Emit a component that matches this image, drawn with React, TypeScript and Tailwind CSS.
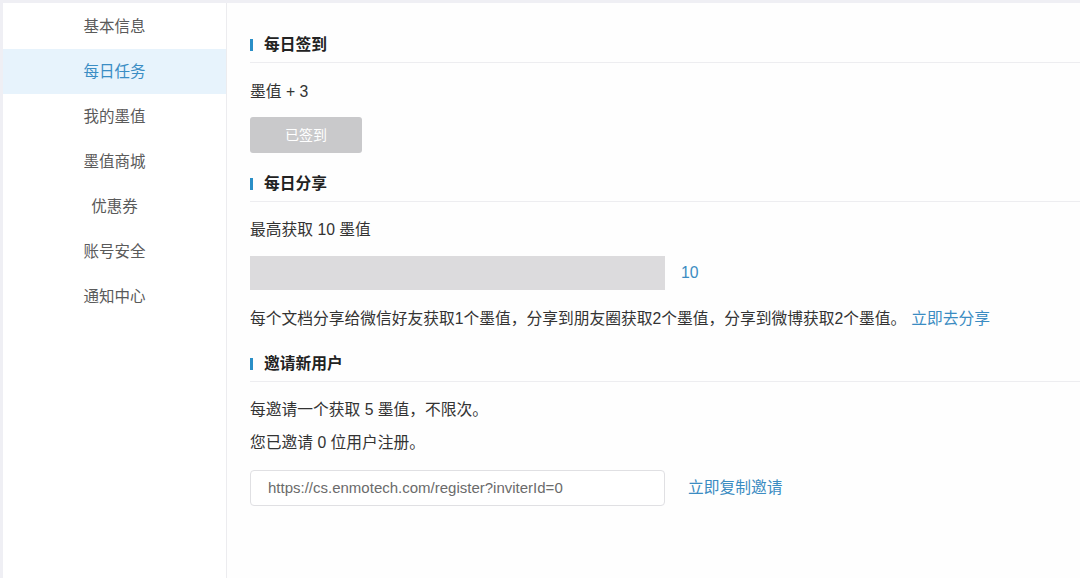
const menu = ["基本信息", "每日任务", "我的墨值", "墨值商城", "优惠券", "账号安全", "通知中心"];

const font = "font-['Liberation_Sans','Noto_Sans_CJK_SC',sans-serif]";

function SectionTitle({ title }: { title: string }) {
  return (
    <div className="flex h-[36px] items-center border-b border-[#ededf0]">
      <span className="h-[12px] w-[3px] bg-[#2a8fc7]" />
      <span className="ml-[11px] text-[15.75px] font-bold text-[#222]">{title}</span>
    </div>
  );
}

export default function App() {
  return (
    <div className={`${font} flex h-[578px] w-[1080px] bg-[#efeff4] pl-[3px] pt-[3px]`}>
      <aside className="w-[224px] shrink-0 border-r border-[#ececef] bg-white pt-[1px]">
        {menu.map((item, i) => (
          <div
            key={item}
            className={`flex h-[45px] items-center justify-center text-[15.5px] ${
              i === 1 ? "bg-[#e7f3fc] text-[#3a8dc4]" : "text-[#5a5a5a]"
            }`}
          >
            {item}
          </div>
        ))}
      </aside>

      <main className="flex-1 bg-[#fefefe] pl-[23px] pt-[24px] text-[15.75px] text-[#333]">
        <SectionTitle title="每日签到" />
        <div className="mt-[15px] flex h-[28px] items-center">墨值 + 3</div>
        <button className="mt-[11px] flex h-[36px] w-[112px] items-center justify-center rounded-[3px] bg-[#c9c9cb] text-[14px] text-white">
          已签到
        </button>

        <div className="mt-[13px]">
          <SectionTitle title="每日分享" />
        </div>
        <div className="mt-[14px] flex h-[28px] items-center">最高获取 10 墨值</div>
        <div className="mt-[12px] flex items-center">
          <div className="h-[34px] w-[415px] bg-[#dcdbdd]" />
          <span className="ml-[16px] text-[#3b8cc2]">10</span>
        </div>
        <div className="mt-[15px] flex h-[28px] items-center">
          每个文档分享给微信好友获取1个墨值，分享到朋友圈获取2个墨值，分享到微博获取2个墨值。
          <a className="ml-[5px] text-[#3b8cc2]">立即去分享</a>
        </div>

        <div className="mt-[13px]">
          <SectionTitle title="邀请新用户" />
        </div>
        <div className="mt-[14px] flex h-[28px] items-center">每邀请一个获取 5 墨值，不限次。</div>
        <div className="mt-[5px] flex h-[28px] items-center">您已邀请 0 位用户注册。</div>
        <div className="mt-[13px] flex items-center">
          <div className="flex h-[36px] w-[415px] items-center rounded-[4px] border border-[#e0e0e3] bg-white pl-[17px] text-[15px] text-[#6b6b6b]">
            https://cs.enmotech.com/register?inviterId=0
          </div>
          <a className="ml-[23px] text-[#3b8cc2]">立即复制邀请</a>
        </div>
      </main>
    </div>
  );
}
